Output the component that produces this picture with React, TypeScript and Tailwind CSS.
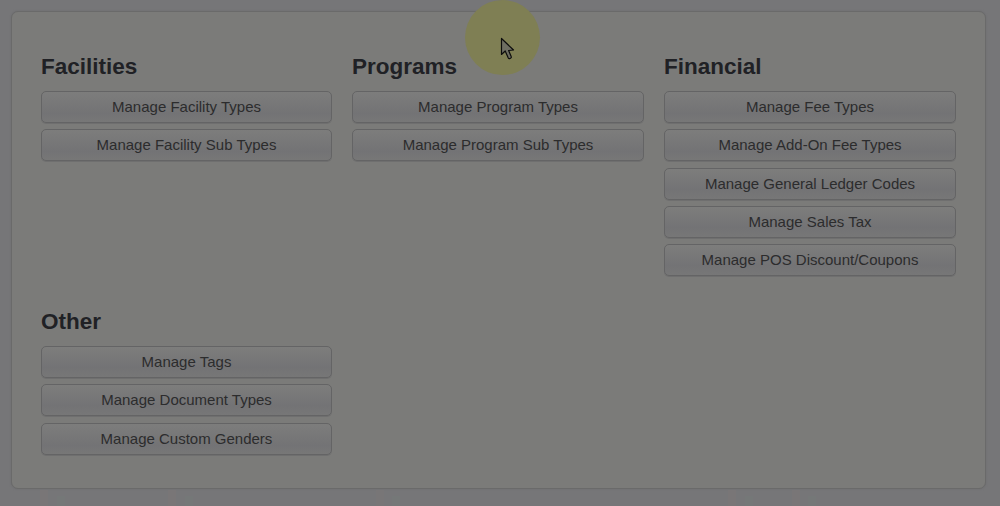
import React from 'react';

const groups = [
  { title: 'Facilities', items: ['Manage Facility Types', 'Manage Facility Sub Types'] },
  { title: 'Programs', items: ['Manage Program Types', 'Manage Program Sub Types'] },
  {
    title: 'Financial',
    items: [
      'Manage Fee Types',
      'Manage Add-On Fee Types',
      'Manage General Ledger Codes',
      'Manage Sales Tax',
      'Manage POS Discount/Coupons',
    ],
  },
  { title: 'Other', items: ['Manage Tags', 'Manage Document Types', 'Manage Custom Genders'] },
];

// faint smudges under the panel left over from the dimmed page
const smudges = [
  'left-[40px] top-[490px] h-[16px] bg-[#797677]',
  'left-[57px] top-[496px] h-[10px] bg-[#757878]',
  'left-[168px] top-[490px] h-[16px] bg-[#797677]',
  'left-[185px] top-[496px] h-[10px] bg-[#757878]',
  'left-[376px] top-[490px] h-[16px] bg-[#787677]',
  'left-[392px] top-[496px] h-[10px] bg-[#757878]',
  'left-[728px] top-[490px] h-[16px] bg-[#797677]',
  'left-[745px] top-[496px] h-[10px] bg-[#757878]',
  'left-[792px] top-[490px] h-[16px] bg-[#797677]',
  'left-[808px] top-[496px] h-[10px] bg-[#757878]',
];

function Section({ title, items }: { title: string; items: string[] }) {
  return (
    <div className="h-[255px]">
      <h2 className="h-[38px] text-[22.5px] leading-[27px] font-bold text-[#202125]">{title}</h2>
      <div className="flex flex-col gap-[6.33px]">
        {items.map((item) => (
          <button
            key={item}
            className="h-[32px] w-full rounded-[5px] border border-[#646465] bg-gradient-to-b from-[#7d7d7c] via-[#737375] via-70% to-[#777777] text-center text-[15px] leading-[30px] text-[#2c2c2d] shadow-[0_1px_0_#6f6f6f]"
          >
            {item}
          </button>
        ))}
      </div>
    </div>
  );
}

export default function App() {
  return (
    <div className="relative h-[506px] w-[1000px] overflow-hidden bg-[#767678] pt-[11px] pl-[11px] font-['Liberation_Sans',Arial,sans-serif]">
      <div className="h-[478px] w-[975px] rounded-[7px] border border-[#6a6a6a] bg-[#7b7b79] pt-[41px] pl-[29px] shadow-[0_0_2px_#6c6c6e]">
        <div className="grid w-[915px] grid-cols-[291px_292px_292px] gap-x-[20px]">
          {groups.map((g) => (
            <Section key={g.title} title={g.title} items={g.items} />
          ))}
        </div>
      </div>

      {smudges.map((s) => (
        <div key={s} className={`absolute w-[8px] ${s}`} />
      ))}

      {/* click highlight + cursor from the recording */}
      <div className="absolute top-0 left-[465px] h-[75px] w-[75px] rounded-full bg-[#7f7f54]" />
      <svg className="absolute top-[37px] left-[500px]" width="16" height="24" viewBox="0 0 16 24">
        <path
          d="M1.5 1.5 L1.5 17.5 L5.2 14 L8.3 21 Q8.8 22 10 21.5 L10.8 21 Q11.7 20.4 11.2 19.4 L8.6 13.5 L13.5 13 Z"
          fill="#6e6e62"
          stroke="#0c0c0c"
          strokeWidth="1.2"
          strokeLinejoin="round"
        />
      </svg>
    </div>
  );
}
